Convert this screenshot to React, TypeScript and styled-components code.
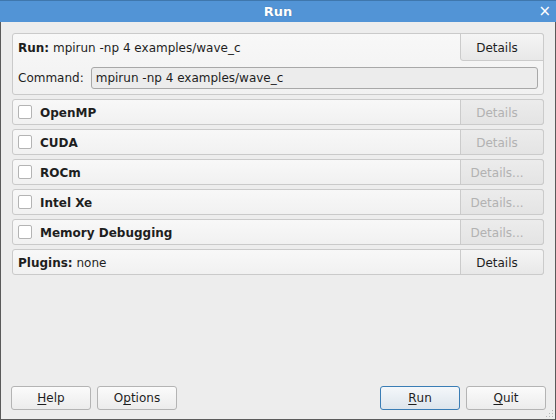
import React from 'react';
import styled, { createGlobalStyle, css } from 'styled-components';

const GlobalStyle = createGlobalStyle`
  html, body {
    margin: 0;
    padding: 0;
    background: #ededed;
  }
  body {
    font-family: "DejaVu Sans", "Liberation Sans", sans-serif;
    font-size: 12px;
    color: #1e1e1e;
  }
`;

type Extension = { name: string; details: string };

const extensions: Extension[] = [
  { name: 'OpenMP', details: 'Details' },
  { name: 'CUDA', details: 'Details' },
  { name: 'ROCm', details: 'Details...' },
  { name: 'Intel Xe', details: 'Details...' },
  { name: 'Memory Debugging', details: 'Details...' },
];

const Grip = () => (
  <GripBox width="10" height="10" viewBox="0 0 10 10">
    {[
      [8, 2], [5, 5], [8, 5], [2, 8], [5, 8], [8, 8],
    ].map(([x, y]) => (
      <rect key={`${x}-${y}`} x={x} y={y} width="1" height="1" fill="#b8b8b8" />
    ))}
  </GripBox>
);

const App = () => {
  return (
    <>
      <GlobalStyle />
      <Window>
        <TitleBar>
          <Title>Run</Title>
          <Close>×</Close>
        </TitleBar>
        <Body>
          <Panels>
            <RunPanel>
              <PanelHead>
                <Label><b>Run:</b> mpirun -np 4 examples/wave_c</Label>
                <DetailsButton tall>Details</DetailsButton>
              </PanelHead>
              <CommandRow>
                <span>Command:</span>
                <CommandInput>mpirun -np 4 examples/wave_c</CommandInput>
              </CommandRow>
            </RunPanel>
            {extensions.map((ext) => (
              <Row key={ext.name}>
                <Check />
                <RowLabel>{ext.name}</RowLabel>
                <DetailsButton disabled>{ext.details}</DetailsButton>
              </Row>
            ))}
            <Row>
              <Label><b>Plugins:</b> none</Label>
              <DetailsButton>Details</DetailsButton>
            </Row>
          </Panels>
          <Footer>
            <ButtonGroup>
              <PushButton><u>H</u>elp</PushButton>
              <PushButton>O<u>p</u>tions</PushButton>
            </ButtonGroup>
            <ButtonGroup>
              <PushButton primary><u>R</u>un</PushButton>
              <PushButton><u>Q</u>uit</PushButton>
            </ButtonGroup>
          </Footer>
        </Body>
        <Grip />
      </Window>
    </>
  );
};

const Window = styled.div`
  position: relative;
  width: 556px;
  height: 420px;
  box-sizing: border-box;
  border: 1px solid #5a5a5a;
  border-top: none;
  display: flex;
  flex-direction: column;
  background: #ededed;
`;

const TitleBar = styled.div`
  height: 22px;
  margin: 0 -1px;
  background: #5294d6;
  border-top: 1px solid #3f77ad;
  box-sizing: border-box;
  display: flex;
  align-items: center;
  justify-content: center;
  position: relative;
`;

const Title = styled.span`
  color: #ffffff;
  font-weight: bold;
  font-size: 13px;
  text-shadow: 0 0 1px rgba(0, 0, 0, 0.3);
`;

const Close = styled.span`
  position: absolute;
  right: 5px;
  top: 1px;
  color: #ffffff;
  font-size: 15px;
`;

const Body = styled.div`
  flex: 1;
  display: flex;
  flex-direction: column;
  justify-content: space-between;
  padding: 11px 11px 9px 11px;
`;

const Panels = styled.div`
  display: flex;
  flex-direction: column;
  gap: 4px;
`;

const panelStyle = css`
  border: 1px solid #cacaca;
  border-radius: 3px;
  background: linear-gradient(#f8f8f8, #f1f1f1);
  box-sizing: border-box;
`;

const RunPanel = styled.div`
  ${panelStyle};
  height: 62px;
  display: flex;
  flex-direction: column;
`;

const PanelHead = styled.div`
  display: flex;
  align-items: center;
  justify-content: space-between;
  padding-left: 5px;
`;

const Label = styled.span`
  color: #1e1e1e;
  padding-top: 1px;
`;

const CommandRow = styled.div`
  display: flex;
  align-items: center;
  gap: 7px;
  padding: 6px 5px 0 5px;
`;

const CommandInput = styled.div`
  flex: 1;
  height: 22px;
  box-sizing: border-box;
  border: 1px solid #a8a8a8;
  border-radius: 3px;
  background: #ececec;
  padding-left: 4px;
  display: flex;
  align-items: center;
`;

const Row = styled.div`
  ${panelStyle};
  height: 26px;
  display: flex;
  align-items: center;
  padding-left: 5px;
`;

const Check = styled.span`
  width: 14px;
  height: 14px;
  box-sizing: border-box;
  border: 1px solid #b4b4b4;
  border-radius: 2px;
  background: #ffffff;
  margin-right: 8px;
`;

const RowLabel = styled.span`
  font-weight: bold;
  flex: 1;
  padding-top: 1px;
`;

const DetailsButton = styled.div<{ disabled?: boolean; tall?: boolean }>`
  margin-left: auto;
  width: 84px;
  height: ${({ tall }) => (tall ? '28px' : '26px')};
  margin-right: -1px;
  margin-top: -1px;
  align-self: flex-start;
  box-sizing: border-box;
  border: 1px solid #cbcbcb;
  border-radius: 0 3px ${({ tall }) => (tall ? '0 3px' : '3px 0')};
  display: flex;
  align-items: center;
  justify-content: center;
  padding: 1px 10px 0 0;
  background: ${({ disabled }) =>
    disabled ? 'linear-gradient(#ececec, #e4e4e4)' : 'linear-gradient(#f5f5f5, #e8e8e8)'};
  color: ${({ disabled }) => (disabled ? '#b2b2b2' : '#1e1e1e')};
`;

const Footer = styled.div`
  display: flex;
  justify-content: space-between;
  margin: 0 -2px 0 -1px;
`;

const ButtonGroup = styled.div`
  display: flex;
  gap: 6px;
`;

const PushButton = styled.div<{ primary?: boolean }>`
  width: 80px;
  height: 24px;
  box-sizing: border-box;
  border: 1px solid ${({ primary }) => (primary ? '#3a7db5' : '#b4b4b4')};
  border-radius: 3px;
  background: ${({ primary }) =>
    primary ? 'linear-gradient(#f4f7fa, #dde5ec)' : 'linear-gradient(#fbfbfb, #ececec)'};
  display: flex;
  align-items: center;
  justify-content: center;
  color: #1e1e1e;
  u {
    text-underline-offset: 2px;
  }
`;

const GripBox = styled.svg`
  position: absolute;
  right: 1px;
  bottom: 1px;
`;

export default App;
